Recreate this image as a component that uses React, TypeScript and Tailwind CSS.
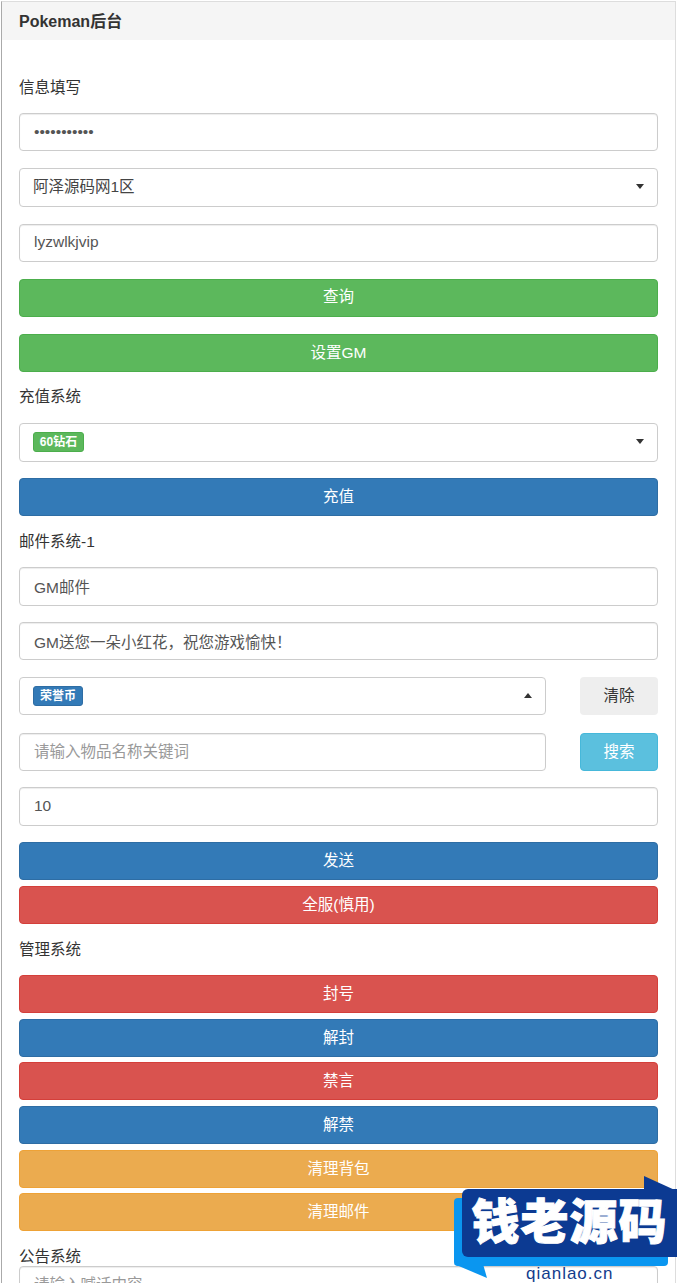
import React from 'react';

const fontStack = '[font-family:"Liberation_Sans","Noto_Sans_CJK_SC",sans-serif]';

function Label({ text, className }: { text: string; className: string }) {
  return <div className={`h-[22px] leading-[24px] text-[15.5px] text-[#333] ${className}`}>{text}</div>;
}

function Field({ value, placeholder, className = '' }: { value?: string; placeholder?: string; className?: string }) {
  return (
    <input
      readOnly
      value={value}
      placeholder={placeholder}
      className={`block h-[38.25px] w-full rounded-[4px] border border-[#ccc] bg-white px-[14px] pb-[1px] text-[15.5px] text-[#555] placeholder:text-[#999] shadow-[inset_0_1px_1px_rgba(0,0,0,0.075)] outline-none ${className}`}
    />
  );
}

function Caret({ up }: { up?: boolean }) {
  return up ? (
    <span className="h-0 w-0 border-x-[4.5px] border-b-[5px] border-x-transparent border-b-[#333]" />
  ) : (
    <span className="h-0 w-0 border-x-[4.5px] border-t-[5px] border-x-transparent border-t-[#333]" />
  );
}

function SelectBox({ children, up, className = '' }: { children: React.ReactNode; up?: boolean; className?: string }) {
  return (
    <div className={`flex h-[38.25px] items-center justify-between rounded-[4px] border border-[#ccc] bg-white pb-[1px] pl-[13px] pr-[13px] text-[15.5px] text-[#444] ${className}`}>
      {children}
      <Caret up={up} />
    </div>
  );
}

function Btn({ text, tone, className = '' }: { text: string; tone: string; className?: string }) {
  return (
    <button className={`block h-[38.25px] w-full rounded-[4px] border pb-[2px] text-center text-[15.5px] text-white ${tone} ${className}`}>
      {text}
    </button>
  );
}

const green = 'bg-[#5cb85c] border-[#4cae4c]';
const blue = 'bg-[#337ab7] border-[#2e6da4]';
const red = 'bg-[#d9534f] border-[#d43f3a]';
const orange = 'bg-[#ebab4f] border-[#eea236]';

export default function App() {
  return (
    <div className={`relative h-[1283px] w-[677px] overflow-hidden bg-white ${fontStack}`}>
      <div className="mx-[1px] mt-[1px] h-[1400px] border-x border-t border-l-[#aaa] border-r-[#ddd] border-t-[#ddd]">
        <div className="flex h-[38px] items-center bg-[#f5f5f5] px-[17px] pt-[1px] text-[16px] font-bold text-[#333]">Pokeman后台</div>

        <div className="px-[17px]">
          <Label text="信息填写" className="mt-[36px]" />
          <Field value="•••••••••••" className="mt-[15px]" />
          <SelectBox className="mt-[17px]">阿泽源码网1区</SelectBox>
          <Field value="lyzwlkjvip" className="mt-[17px]" />
          <Btn text="查询" tone={green} className="mt-[17px]" />
          <Btn text="设置GM" tone={green} className="mt-[17px]" />

          <Label text="充值系统" className="mt-[13px]" />
          <SelectBox className="mt-[16px]">
            <span className="flex h-[20px] w-[51px] items-center justify-center rounded-[3px] border border-[#4cae4c] bg-[#5cb85c] text-[12px] font-bold text-white">60钻石</span>
          </SelectBox>
          <Btn text="充值" tone={blue} className="mt-[16.5px]" />

          <Label text="邮件系统-1" className="mt-[14px]" />
          <Field value="GM邮件" className="mt-[15px]" />
          <Field value="GM送您一朵小红花，祝您游戏愉快！" className="mt-[16.5px]" />

          <div className="mt-[16.75px] flex justify-between">
            <SelectBox up className="w-[527px]">
              <span className="flex h-[20px] w-[50px] items-center justify-center rounded-[3px] border border-[#2e6da4] bg-[#337ab7] text-[12px] font-bold text-white">荣誉币</span>
            </SelectBox>
            <button className="h-[38.25px] w-[78px] rounded-[4px] bg-[#eee] pb-[2px] text-[15.5px] text-[#333]">清除</button>
          </div>
          <div className="mt-[17.75px] flex justify-between">
            <div className="w-[527px]">
              <Field placeholder="请输入物品名称关键词" />
            </div>
            <button className="h-[38.25px] w-[78px] rounded-[4px] border border-[#46b8da] bg-[#5bc0de] pb-[2px] text-[15.5px] text-white">搜索</button>
          </div>
          <Field value="10" className="mt-[16px]" />
          <Btn text="发送" tone={blue} className="mt-[16.5px]" />
          <Btn text="全服(慎用)" tone={red} className="mt-[5.75px]" />

          <Label text="管理系统" className="mt-[14px]" />
          <Btn text="封号" tone={red} className="mt-[14.75px]" />
          <Btn text="解封" tone={blue} className="mt-[5.75px]" />
          <Btn text="禁言" tone={red} className="mt-[4.75px]" />
          <Btn text="解禁" tone={blue} className="mt-[5.75px]" />
          <Btn text="清理背包" tone={orange} className="mt-[5.75px]" />
          <Btn text="清理邮件" tone={orange} className="mt-[4.75px]" />

          <Label text="公告系统" className="mt-[14px]" />
          <Field placeholder="请输入喊话内容" className="-mt-[1.25px]" />
        </div>
      </div>

      {/* watermark over the page */}
      <div className="absolute left-[454px] top-[1176px] h-[107px] w-[223px]">
        <div className="absolute left-0 top-[22px] h-[68px] w-[214px] rounded-[4px] bg-[#0a96f0]" />
        <svg className="absolute left-0 top-0" width="223" height="107" viewBox="0 0 223 107">
          <path d="M0 88 L33 102 L29 88 Z" fill="#0a96f0" />
          <path d="M190 0 L223 15 L223 20 L190 20 Z" fill="#0c3a92" />
        </svg>
        <div className="absolute left-[8px] top-[13px] flex h-[68px] w-[215px] items-center justify-center rounded-l-[6px] bg-[#0c3a92] text-[48px] font-black leading-none tracking-[1px] text-white [-webkit-text-stroke:1px_white]">
          钱老源码
        </div>
        <div className="absolute left-[72px] top-[88px] text-[17px] leading-[20px] tracking-[1px] text-[#123c8c]">qianlao.cn</div>
      </div>
    </div>
  );
}
